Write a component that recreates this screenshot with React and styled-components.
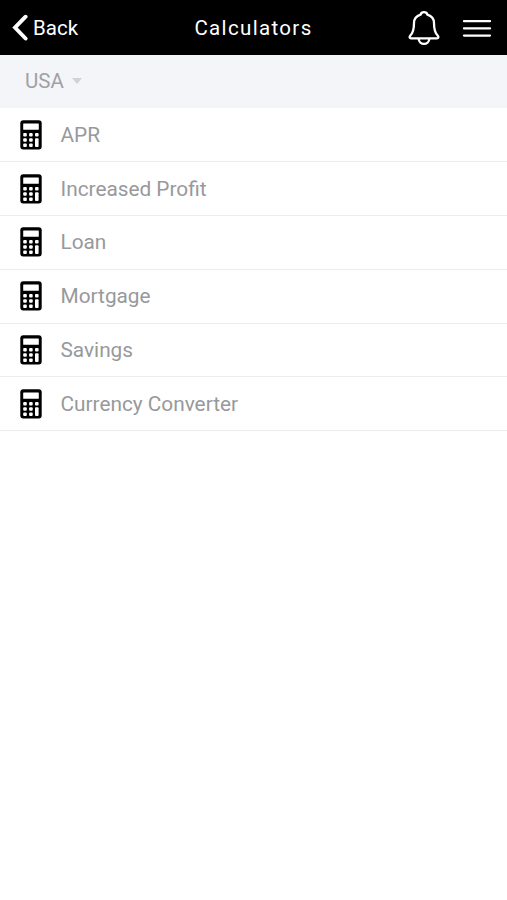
import { useState } from 'react';
import styled, { createGlobalStyle } from 'styled-components';

const calculators = [
  'APR',
  'Increased Profit',
  'Loan',
  'Mortgage',
  'Savings',
  'Currency Converter',
];

const CalculatorIcon = () => (
  <Icon width="22" height="30" viewBox="0 0 22 30">
    <rect x="0.3" y="0.3" width="21.4" height="29.2" rx="3" fill="#000" />
    <g fill="#fff">
      <rect x="3.2" y="3.6" width="15.6" height="6.2" rx="0.5" />
      <rect x="3.2" y="13" width="3.6" height="3.4" rx="1" />
      <rect x="9.1" y="13" width="3.6" height="3.4" rx="1" />
      <rect x="15" y="13" width="3.6" height="3.4" rx="1" />
      <rect x="3.2" y="18.3" width="3.6" height="3.4" rx="1" />
      <rect x="9.1" y="18.3" width="3.6" height="3.4" rx="1" />
      <rect x="3.2" y="23.6" width="3.6" height="3.4" rx="1" />
      <rect x="9.1" y="23.6" width="3.6" height="3.4" rx="1" />
      <rect x="15" y="18.3" width="3.6" height="8.7" rx="1" />
    </g>
  </Icon>
);

function App() {
  const [selected, setSelected] = useState(null);

  return (
    <Container>
      <GlobalStyle />
      <Header>
        <BackButton>
          <Icon width="16" height="28" viewBox="0 0 16 28">
            <path d="M13.6 2.7L3 13.6L13.6 24.5" fill="none" stroke="#fff" strokeWidth="3.9" strokeLinecap="round" />
          </Icon>
          Back
        </BackButton>
        <Title>Calculators</Title>
        <Actions>
          <Icon width="32" height="36" viewBox="0 0 32 36">
            <g fill="none" stroke="#fff" strokeWidth="2.3" strokeLinejoin="round">
              <path d="M12.6 4.6C13.4 1.4 18.6 1.4 19.4 4.6C23.8 6 26 9 26 13C26 20 26.8 22.8 29.6 25.4C31 27 30.4 28.4 29 28.4H3C1.6 28.4 1 27 2.4 25.4C5.2 22.8 6 20 6 13C6 9 8.2 6 12.6 4.6Z" />
              <path d="M10.7 28.8C10.9 35.5 21.1 35.5 21.3 28.8" />
            </g>
          </Icon>
          <Icon width="30" height="20" viewBox="0 0 30 20">
            <path d="M2 3.2H28M2 10.4H28M2 17.6H28" stroke="#fff" strokeWidth="2.3" strokeLinecap="round" />
          </Icon>
        </Actions>
      </Header>
      <Country>
        USA
        <Caret />
      </Country>
      <List>
        {
          calculators.map((item) => (
            <Row key={item} onClick={() => setSelected(item)} aria-current={selected === item}>
              <CalculatorIcon />
              <Label>{item}</Label>
            </Row>
          ))
        }
      </List>
    </Container>
  );
}

export default App;

const GlobalStyle = createGlobalStyle`
  body {
    margin: 0;
    background: #fff;
  }
`

const Container = styled.div`
  min-height: 100vh;
  background: #fff;
  font-family: Roboto, sans-serif;
  font-size: 20.5px;
`

const Icon = styled.svg`
  display: block;
  flex-shrink: 0;
`

const Header = styled.header`
  display: grid;
  grid-template-columns: 1fr auto 1fr;
  align-items: center;
  box-sizing: border-box;
  height: 54.6px;
  padding: 1px 15px 0 12px;
  background: #000;
  color: #fff;
`

const BackButton = styled.button`
  display: flex;
  align-items: center;
  gap: 5px;
  padding: 0;
  border: 0;
  background: none;
  color: inherit;
  font: inherit;
`

const Title = styled.h1`
  margin: 0;
  padding-left: 3px;
  font-size: 20.5px;
  font-weight: 400;
  letter-spacing: 1.35px;
`

const Actions = styled.div`
  display: flex;
  align-items: center;
  justify-content: flex-end;
  gap: 22px;
`

const Country = styled.div`
  display: flex;
  align-items: center;
  gap: 8px;
  box-sizing: border-box;
  height: 53.8px;
  padding: 0 0 1px 25px;
  background: #f3f5f9;
  color: #a0a1a4;
`

const Caret = styled.span`
  border: 5.5px solid transparent;
  border-top: 6px solid #d0d2d5;
  border-bottom: 0;
`

const List = styled.ul`
  margin: 0;
  padding: 0;
  list-style: none;
`

const Row = styled.li`
  display: flex;
  align-items: center;
  gap: 18.5px;
  box-sizing: border-box;
  height: 53.8px;
  padding-left: 20px;
  border-bottom: 1px solid #ebecee;
`

const Label = styled.span`
  color: #97999c;
  font-size: 20.8px;
`
